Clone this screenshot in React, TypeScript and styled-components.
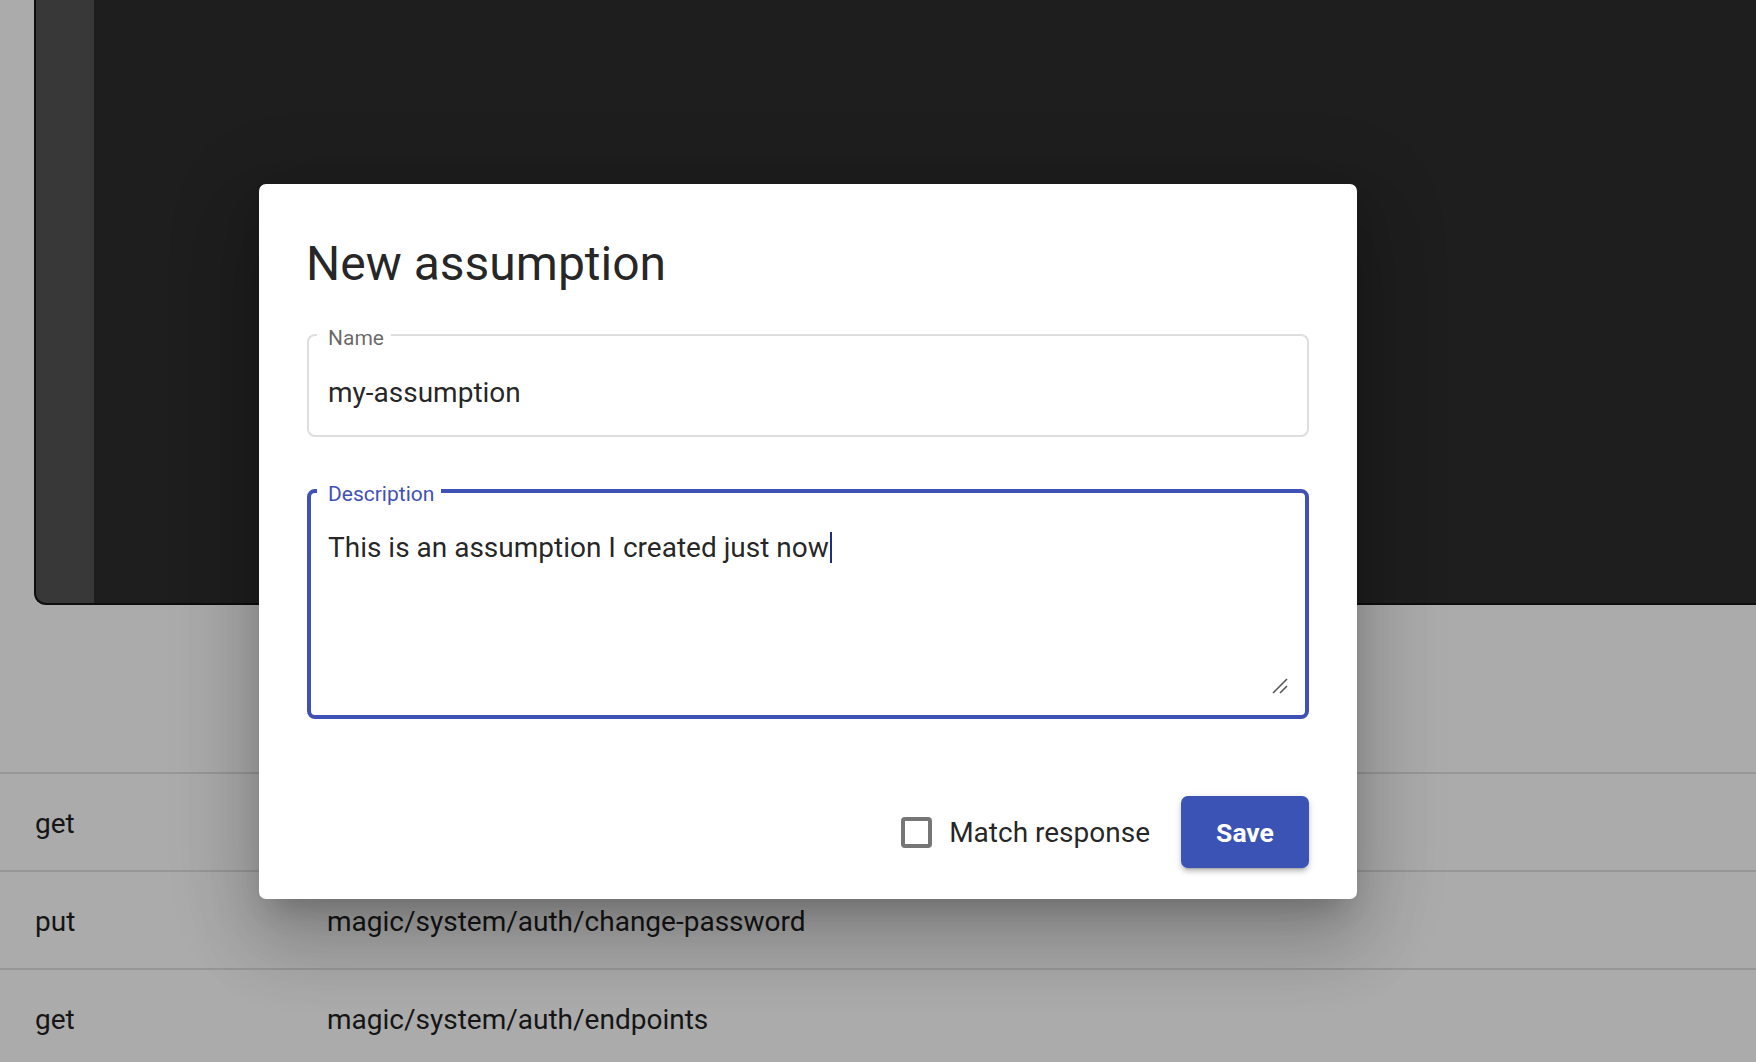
import React from "react";
import styled, { createGlobalStyle } from "styled-components";

const Global = createGlobalStyle`
  html, body {
    margin: 0;
    padding: 0;
    height: 100%;
    overflow: hidden;
    background: #ababab;
    font-family: Roboto, "Noto Sans", Arial, sans-serif;
  }
  #root { height: 100%; }
  * { box-sizing: border-box; }
`;

const Page = styled.div`
  position: relative;
  height: 100vh;
  overflow: hidden;
  background: #ababab;
`;

const Editor = styled.div`
  margin-left: 34px;
  height: 605px;
  display: flex;
  background: #1e1e1e;
  border-left: 2px solid #0e0e0e;
  border-bottom: 2px solid #0e0e0e;
  border-bottom-left-radius: 12px;
  overflow: hidden;
`;

const Gutter = styled.div`
  width: 58px;
  flex: none;
  background: #383838;
`;

const Code = styled.div`
  flex: 1;
  background: #1e1e1e;
`;

const Table = styled.div`
  margin-top: 167px;
  display: flex;
  flex-direction: column;
`;

const Row = styled.div`
  display: grid;
  grid-template-columns: 292px 1fr;
  align-items: center;
  height: 98px;
  padding: 0 0 0 35px;
  border-top: 2px solid #979797;
  font-size: 28px;
  color: #151515;
`;

const Cell = styled.div`
  white-space: nowrap;
  padding-top: 2px;
`;

const Dialog = styled.div`
  position: absolute;
  left: 259px;
  top: 184px;
  width: 1098px;
  background: #ffffff;
  border-radius: 7px;
  padding: 52px 48px 31px;
  display: flex;
  flex-direction: column;
  box-shadow: 0 20px 28px -13px rgba(0, 0, 0, 0.2),
    0 44px 70px 6px rgba(0, 0, 0, 0.14), 0 17px 85px 15px rgba(0, 0, 0, 0.12);
`;

const Title = styled.h2`
  margin: 0 0 30px -1px;
  font-family: Roboto, Arial, sans-serif;
  font-size: 48px;
  line-height: 56px;
  font-weight: 400;
  color: rgba(0, 0, 0, 0.87);
`;

const Field = styled.fieldset<{ $focused?: boolean }>`
  position: relative;
  margin: 0;
  min-width: 0;
  border: ${(p) => (p.$focused ? "4px solid #3f51b5" : "2px solid #dedede")};
  border-radius: 8px;
  padding: 0 ${(p) => (p.$focused ? "6px" : "8px")};
  & + & {
    margin-top: 41px;
  }
`;

const Legend = styled.legend<{ $focused?: boolean }>`
  padding: 0 7px 0 11px;
  font-family: Roboto, Arial, sans-serif;
  font-size: 21px;
  line-height: 26px;
  color: ${(p) => (p.$focused ? "#3f51b5" : "rgba(0,0,0,0.6)")};
`;

const LegendText = styled.span`
  position: relative;
  top: 3px;
`;

const TextInput = styled.input`
  display: block;
  width: 100%;
  height: 87px;
  border: 0;
  outline: 0;
  background: transparent;
  padding: 26px 11px 25px;
  font-family: Roboto, Arial, sans-serif;
  font-size: 28px;
  line-height: 36px;
  color: rgba(0, 0, 0, 0.87);
`;

const AreaBody = styled.div`
  height: 211px;
  padding: 26px 11px 0;
  font-family: Roboto, Arial, sans-serif;
  font-size: 28px;
  line-height: 36px;
  color: rgba(0, 0, 0, 0.87);
  white-space: pre-wrap;
`;

const Caret = styled.span`
  display: inline-block;
  width: 2px;
  height: 31px;
  margin-left: 1px;
  vertical-align: -6px;
  background: #1f2f80;
`;

const ResizeHandle = styled.svg`
  position: absolute;
  right: 16px;
  bottom: 20px;
  width: 18px;
  height: 18px;
`;

const Footer = styled.div`
  margin-top: 77px;
  display: flex;
  justify-content: flex-end;
  align-items: center;
`;

const CheckLabel = styled.label`
  display: flex;
  align-items: center;
  gap: 17px;
  margin-right: 31px;
  font-family: Roboto, Arial, sans-serif;
  font-size: 28px;
  color: rgba(0, 0, 0, 0.87);
`;

const Box = styled.span`
  width: 31px;
  height: 31px;
  border: 4px solid #767676;
  border-radius: 4px;
  background: #fff;
`;

const SaveButton = styled.button`
  width: 128px;
  height: 72px;
  border: 0;
  border-radius: 7px;
  background: #3a53b4;
  color: #ffffff;
  font-family: Roboto, Arial, sans-serif;
  font-size: 26.5px;
  font-weight: 700;
  cursor: pointer;
  box-shadow: 0 5px 2px -4px rgba(0, 0, 0, 0.2), 0 4px 4px 0 rgba(0, 0, 0, 0.14),
    0 2px 9px 0 rgba(0, 0, 0, 0.12);
`;

const rows = [
  { method: "get", path: "magic/system/auth/authenticate" },
  { method: "put", path: "magic/system/auth/change-password" },
  { method: "get", path: "magic/system/auth/endpoints" },
];

export default function App() {
  return (
    <Page>
      <Global />
      <Editor>
        <Gutter />
        <Code />
      </Editor>
      <Table>
        {rows.map((r, i) => (
          <Row key={i}>
            <Cell>{r.method}</Cell>
            <Cell>{r.path}</Cell>
          </Row>
        ))}
      </Table>

      <Dialog role="dialog">
        <Title>New assumption</Title>
        <Field>
          <Legend>
            <LegendText>Name</LegendText>
          </Legend>
          <TextInput readOnly value="my-assumption" />
        </Field>
        <Field $focused>
          <Legend $focused>
            <LegendText>Description</LegendText>
          </Legend>
          <AreaBody>
            This is an assumption I created just now
            <Caret />
          </AreaBody>
          <ResizeHandle viewBox="0 0 18 18">
            <line x1="2" y1="16" x2="16" y2="2" stroke="#555" strokeWidth="1.6" />
            <line x1="9" y1="16" x2="16" y2="9" stroke="#555" strokeWidth="1.6" />
          </ResizeHandle>
        </Field>
        <Footer>
          <CheckLabel>
            <Box />
            Match response
          </CheckLabel>
          <SaveButton>Save</SaveButton>
        </Footer>
      </Dialog>
    </Page>
  );
}
